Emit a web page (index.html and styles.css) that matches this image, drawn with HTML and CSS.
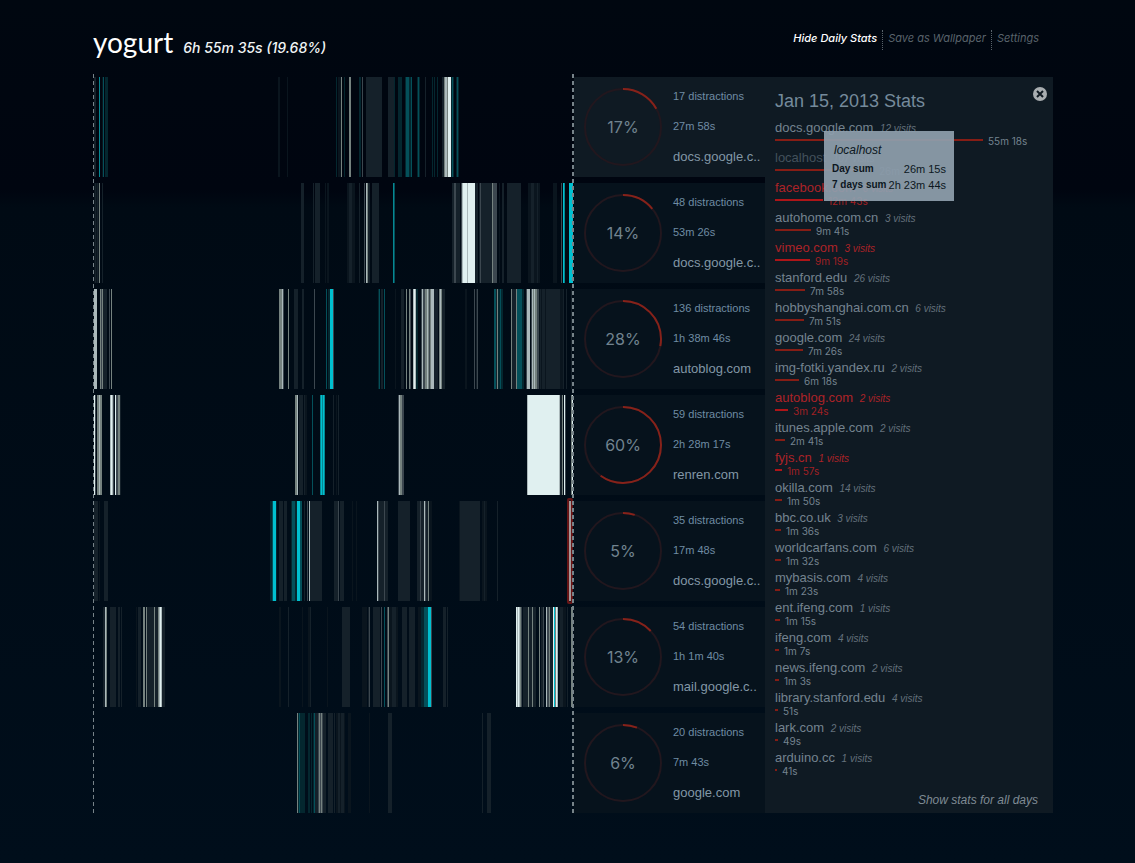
FILE: index.html
```html
<!DOCTYPE html>
<html lang="en">
<head>
<meta charset="utf-8">
<title>yogurt</title>
<link rel="stylesheet" href="styles.css">
</head>
<body>
<header class="top">
  <h1 class="logo">yogurt</h1>
  <p class="total">6h 55m 35s (19.68%)</p>
  <nav class="menu">
    <a class="menu-item current" href="#">Hide Daily Stats</a>
    <a class="menu-item" href="#">Save as Wallpaper</a>
    <a class="menu-item" href="#">Settings</a>
  </nav>
</header>
<main class="board">
  <div class="days">
    <section class="day selected">
      <svg class="strip" viewBox="0 0 480 100" preserveAspectRatio="none" aria-hidden="true">
        <path class="a" d="M9 50h1M185 50h2M194 50h1M245 50h3"/>
        <path class="b" d="M1 50h2M273 50h16M295 50h6M332 50h1M349 50h2"/>
        <path class="t1" d="M12 50h3M243 50h1M251 50h1M266 50h2M301 50h1M305 50h4M312 50h7M324 50h3M339 50h1M341 50h1M344 50h1M358 50h3M363 50h3"/>
        <path class="t2" d="M10 50h1M313 50h3M318 50h1M325 50h1M359 50h1M364 50h1"/>
        <path class="t3" d="M6 50h1"/>
        <path class="d" d="M248 50h1M256 50h2M351 50h1M354 50h1"/>
        <path class="c" d="M269 50h1"/>
        <path class="e" d="M352 50h2"/>
        <path class="f" d="M355 50h3"/>
      </svg>
      <div class="card">
        <svg class="ring" viewBox="0 0 80 80"><circle class="track" cx="40" cy="40" r="38"/><circle class="arc" pathLength="100" stroke-dasharray="17 100" cx="40" cy="40" r="38"/><text x="40" y="46">17%</text></svg>
        <div class="facts"><p>17 distractions</p><p>27m 58s</p><p class="site">docs.google.c..</p></div>
      </div>
    </section>
    <section class="day">
      <svg class="strip" viewBox="0 0 480 100" preserveAspectRatio="none" aria-hidden="true">
        <path class="a" d="M1 50h6M232 50h1M234 50h2M254 50h8M406 50h1M435 50h12M460 50h4"/>
        <path class="b" d="M2 50h1M4 50h1M9 50h1M208 50h3M220 50h1M222 50h5M256 50h3M266 50h1M275 50h2M279 50h7M359 50h2M363 50h4M382 50h3M386 50h13M409 50h2M414 50h14M438 50h3M444 50h1"/>
        <path class="c" d="M271 50h1M361 50h2M368 50h1M387 50h1M400 50h4M468 50h1"/>
        <path class="d" d="M6 50h1M274 50h1M399 50h1"/>
        <path class="e" d="M273 50h1M369 50h1"/>
        <path class="f" d="M370 50h12"/>
        <path class="e" d="M374 50h1"/>
        <path class="t2" d="M301 50h1"/>
        <path class="t3" d="M300 50h1M471 50h1"/>
        <path class="t4" d="M470 50h1M476 50h4"/>
      </svg>
      <div class="card">
        <svg class="ring" viewBox="0 0 80 80"><circle class="track" cx="40" cy="40" r="38"/><circle class="arc" pathLength="100" stroke-dasharray="14 100" cx="40" cy="40" r="38"/><text x="40" y="46">14%</text></svg>
        <div class="facts"><p>48 distractions</p><p>53m 26s</p><p class="site">docs.google.c..</p></div>
      </div>
    </section>
    <section class="day">
      <svg class="strip" viewBox="0 0 480 100" preserveAspectRatio="none" aria-hidden="true">
        <path class="a" d="M302 50h1M372 50h2M446 50h24M323 50h2"/>
        <path class="b" d="M10 50h4M201 50h4M209 50h2M288 50h2M308 50h3M341 50h4M349 50h3M383 50h1M403 50h1M419 50h4M447 50h1M449 50h3M453 50h14M470 50h1M473 50h1M478 50h1"/>
        <path class="c" d="M8 50h1M16 50h1M190 50h1M221 50h1M240 50h1M317 50h1M328 50h1M330 50h2M336 50h1M381 50h1M384 50h1M433 50h1M438 50h1M444 50h2"/>
        <path class="d" d="M7 50h1M9 50h1M18 50h1M186 50h3M195 50h1M313 50h1M316 50h1M332 50h2M335 50h1M337 50h1M346 50h3M404 50h1M418 50h1M423 50h1M440 50h4"/>
        <path class="e" d="M1 50h3M189 50h1M320 50h1M322 50h1M329 50h1M334 50h1M338 50h3M347 50h1M434 50h3M439 50h1M441 50h1"/>
        <path class="f" d="M321 50h1"/>
        <path class="t1" d="M235 50h2M285 50h1M323 50h2M405 50h5M429 50h2"/>
        <path class="t2" d="M233 50h1M286 50h1M291 50h1M401 50h2M407 50h1M424 50h5"/>
        <path class="t4" d="M237 50h3"/>
      </svg>
      <div class="card">
        <svg class="ring" viewBox="0 0 80 80"><circle class="track" cx="40" cy="40" r="38"/><circle class="arc" pathLength="100" stroke-dasharray="28 100" cx="40" cy="40" r="38"/><text x="40" y="46">28%</text></svg>
        <div class="facts"><p>136 distractions</p><p>1h 38m 46s</p><p class="site">autoblog.com</p></div>
      </div>
    </section>
    <section class="day">
      <svg class="strip" viewBox="0 0 480 100" preserveAspectRatio="none" aria-hidden="true">
        <path class="a" d="M243 50h1M211 50h3"/>
        <path class="b" d="M27 50h1M206 50h4M211 50h1M240 50h1M245 50h1M467 50h2"/>
        <path class="c" d="M2 50h1M20 50h1M23 50h2M305 50h1M309 50h2M472 50h1"/>
        <path class="d" d="M4 50h2M7 50h2M25 50h2M202 50h2M307 50h2M469 50h1M478 50h1"/>
        <path class="e" d="M6 50h1M17 50h1M19 50h1M204 50h1M306 50h1M434 50h1M466 50h1"/>
        <path class="f" d="M1 50h1M18 50h1M22 50h1M435 50h31M471 50h1M479 50h1"/>
        <path class="t2" d="M219 50h1"/>
        <path class="t3" d="M227 50h5"/>
        <path class="t4" d="M228 50h1M230 50h1"/>
      </svg>
      <div class="card">
        <svg class="ring" viewBox="0 0 80 80"><circle class="track" cx="40" cy="40" r="38"/><circle class="arc" pathLength="100" stroke-dasharray="60 100" cx="40" cy="40" r="38"/><text x="40" y="46">60%</text></svg>
        <div class="facts"><p>59 distractions</p><p>2h 28m 17s</p><p class="site">renren.com</p></div>
      </div>
    </section>
    <section class="day">
      <svg class="strip" viewBox="0 0 480 100" preserveAspectRatio="none" aria-hidden="true">
        <path class="a" d="M6 50h1M259 50h1M263 50h1M336 50h3M366 50h1M389 50h5"/>
        <path class="b" d="M1 50h4M11 50h4M186 50h4M191 50h3M211 50h1M217 50h12M241 50h4M247 50h4M286 50h9M305 50h12M324 50h3M328 50h7M367 50h20M391 50h1M404 50h1"/>
        <path class="c" d="M214 50h1M245 50h1M285 50h1M291 50h1M327 50h1M332 50h1"/>
        <path class="d" d="M335 50h1"/>
        <path class="e" d="M216 50h1M284 50h1M331 50h1"/>
        <path class="t1" d="M177 50h2M183 50h1M198 50h6"/>
        <path class="t2" d="M179 50h1M199 50h3M207 50h2"/>
        <path class="t4" d="M180 50h3M204 50h3"/>
        <path class="e" d="M476 50h2"/>
      </svg>
      <span class="marker"></span>
      <div class="card">
        <svg class="ring" viewBox="0 0 80 80"><circle class="track" cx="40" cy="40" r="38"/><circle class="arc" pathLength="100" stroke-dasharray="5 100" cx="40" cy="40" r="38"/><text x="40" y="46">5%</text></svg>
        <div class="facts"><p>35 distractions</p><p>17m 48s</p><p class="site">docs.google.c..</p></div>
      </div>
    </section>
    <section class="day">
      <svg class="strip" viewBox="0 0 480 100" preserveAspectRatio="none" aria-hidden="true">
        <path class="a" d="M43 50h1M186 50h2M209 50h1M215 50h3M234 50h1M269 50h5M296 50h9M325 50h3M466 50h7"/>
        <path class="b" d="M10 50h2M17 50h6M25 50h2M28 50h1M45 50h3M54 50h11M69 50h3M195 50h1M217 50h1M249 50h8M275 50h1M280 50h7M299 50h4M309 50h5M316 50h6M350 50h3M354 50h1M430 50h9M440 50h3M448 50h3M457 50h3M467 50h3M474 50h1"/>
        <path class="c" d="M276 50h1M288 50h1M294 50h1M338 50h1M428 50h1M450 50h1M454 50h2"/>
        <path class="d" d="M13 50h1M50 50h2M53 50h1M61 50h1M65 50h1M295 50h1M423 50h1M427 50h1M435 50h1M439 50h1M446 50h1M456 50h1M462 50h1M478 50h2"/>
        <path class="e" d="M12 50h1M66 50h3M424 50h3M453 50h1M464 50h1"/>
        <path class="f" d="M67 50h1M423 50h1M425 50h1M460 50h1M463 50h1"/>
        <path class="t1" d="M328 50h3"/>
        <path class="t2" d="M291 50h1M331 50h4"/>
        <path class="t4" d="M335 50h3M461 50h1"/>
      </svg>
      <div class="card">
        <svg class="ring" viewBox="0 0 80 80"><circle class="track" cx="40" cy="40" r="38"/><circle class="arc" pathLength="100" stroke-dasharray="13 100" cx="40" cy="40" r="38"/><text x="40" y="46">13%</text></svg>
        <div class="facts"><p>54 distractions</p><p>1h 1m 40s</p><p class="site">mail.google.c..</p></div>
      </div>
    </section>
    <section class="day">
      <svg class="strip" viewBox="0 0 480 100" preserveAspectRatio="none" aria-hidden="true">
        <path class="a" d="M243 50h9M255 50h3M276 50h1"/>
        <path class="b" d="M222 50h3M230 50h3M235 50h5M241 50h1M245 50h2M248 50h3M295 50h4M389 50h1M394 50h4"/>
        <path class="t1" d="M205 50h7M215 50h2M218 50h1M220 50h1"/>
        <path class="t2" d="M206 50h1M221 50h1"/>
        <path class="c" d="M225 50h5"/>
        <path class="d" d="M204 50h1M226 50h1M228 50h1"/>
      </svg>
      <div class="card">
        <svg class="ring" viewBox="0 0 80 80"><circle class="track" cx="40" cy="40" r="38"/><circle class="arc" pathLength="100" stroke-dasharray="6 100" cx="40" cy="40" r="38"/><text x="40" y="46">6%</text></svg>
        <div class="facts"><p>20 distractions</p><p>7m 43s</p><p class="site">google.com</p></div>
      </div>
    </section>
  </div>
  <aside class="panel">
    <button class="close" type="button" aria-label="Close">
      <svg viewBox="0 0 14 14"><circle cx="7" cy="7" r="7"/><path d="M4 4l6 6M10 4l-6 6"/></svg>
    </button>
    <h2 class="title">Jan 15, 2013 Stats</h2>
    <ul class="sites">
      <li><p class="name">docs.google.com <i>12 visits</i></p><p class="time"><span class="bar" style="width:208px"></span>55m 18s</p></li>
      <li class="hovered"><p class="name">localhost <i>107 visits</i></p><p class="time"><span class="bar" style="width:99px"></span>26m 15s</p>
        <div class="tip">
          <p class="tip-name">localhost</p>
          <dl><dt>Day sum</dt><dd>26m 15s</dd><dt>7 days sum</dt><dd>2h 23m 44s</dd></dl>
        </div>
      </li>
      <li class="bad"><p class="name">facebook.com <i>6 visits</i></p><p class="time"><span class="bar" style="width:48px"></span>12m 43s</p></li>
      <li><p class="name">autohome.com.cn <i>3 visits</i></p><p class="time"><span class="bar" style="width:36px"></span>9m 41s</p></li>
      <li class="bad"><p class="name">vimeo.com <i>3 visits</i></p><p class="time"><span class="bar" style="width:35px"></span>9m 19s</p></li>
      <li><p class="name">stanford.edu <i>26 visits</i></p><p class="time"><span class="bar" style="width:30px"></span>7m 58s</p></li>
      <li><p class="name">hobbyshanghai.com.cn <i>6 visits</i></p><p class="time"><span class="bar" style="width:29px"></span>7m 51s</p></li>
      <li><p class="name">google.com <i>24 visits</i></p><p class="time"><span class="bar" style="width:28px"></span>7m 26s</p></li>
      <li><p class="name">img-fotki.yandex.ru <i>2 visits</i></p><p class="time"><span class="bar" style="width:24px"></span>6m 18s</p></li>
      <li class="bad"><p class="name">autoblog.com <i>2 visits</i></p><p class="time"><span class="bar" style="width:13px"></span>3m 24s</p></li>
      <li><p class="name">itunes.apple.com <i>2 visits</i></p><p class="time"><span class="bar" style="width:10px"></span>2m 41s</p></li>
      <li class="bad"><p class="name">fyjs.cn <i>1 visits</i></p><p class="time"><span class="bar" style="width:7px"></span>1m 57s</p></li>
      <li><p class="name">okilla.com <i>14 visits</i></p><p class="time"><span class="bar" style="width:7px"></span>1m 50s</p></li>
      <li><p class="name">bbc.co.uk <i>3 visits</i></p><p class="time"><span class="bar" style="width:6px"></span>1m 36s</p></li>
      <li><p class="name">worldcarfans.com <i>6 visits</i></p><p class="time"><span class="bar" style="width:6px"></span>1m 32s</p></li>
      <li><p class="name">mybasis.com <i>4 visits</i></p><p class="time"><span class="bar" style="width:5px"></span>1m 23s</p></li>
      <li><p class="name">ent.ifeng.com <i>1 visits</i></p><p class="time"><span class="bar" style="width:5px"></span>1m 15s</p></li>
      <li><p class="name">ifeng.com <i>4 visits</i></p><p class="time"><span class="bar" style="width:4px"></span>1m 7s</p></li>
      <li><p class="name">news.ifeng.com <i>2 visits</i></p><p class="time"><span class="bar" style="width:4px"></span>1m 3s</p></li>
      <li><p class="name">library.stanford.edu <i>4 visits</i></p><p class="time"><span class="bar" style="width:3px"></span>51s</p></li>
      <li><p class="name">lark.com <i>2 visits</i></p><p class="time"><span class="bar" style="width:3px"></span>49s</p></li>
      <li><p class="name">arduino.cc <i>1 visits</i></p><p class="time"><span class="bar" style="width:2px"></span>41s</p></li>
    </ul>
    <a class="all" href="#">Show stats for all days</a>
  </aside>
</main>
</body>
</html>
```
FILE: styles.css
```css
* { box-sizing: border-box; }

html { min-height: 100%; background: linear-gradient(#000710, #000510 22%, #000a14 24%, #000e1b); }

body {
  margin: 0;
  padding: 0 82px 50px 93px;
  font: 11px/14px "Liberation Sans", Arial, sans-serif;
  color: #74899b;
}

p, h1, h2, ul, dl, dd { margin: 0; padding: 0; }

/* header */
.top { display: flex; align-items: baseline; height: 77px; padding-top: 25px; font-family: Lato, sans-serif; }
.logo { font-size: 28px; line-height: 34px; font-weight: 400; color: #fff; }
.total { margin-left: 10px; font-family: Inter, sans-serif; font-size: 14px; line-height: 20px; font-style: italic; font-weight: 500; color: #f0f4f5; }
.menu { display: flex; align-self: flex-start; margin: 5px 9px 0 auto; }
.menu-item {
  padding: 0 5px;
  font-family: Inter, sans-serif;
  font-size: 11px;
  line-height: 16px;
  height: 20px;
  font-style: italic;
  color: #59636b;
  text-decoration: none;
}
.menu-item + .menu-item { border-left: 1px dotted #59636b; }
.menu-item.current { color: #fff; font-weight: 500; }

/* board */
.board { display: grid; grid-template-columns: minmax(0, 1fr) 288px; }
.days { position: relative; display: grid; gap: 6px; }
.days::before, .days::after {
  content: "";
  position: absolute;
  top: -3px;
  bottom: 0;
  background: repeating-linear-gradient(#778389 0 4px, transparent 4px 7px);
}
.days::before { left: 0; width: 1px; }
.days::after { right: 191px; width: 2px; }
.day { position: relative; display: grid; grid-template-columns: minmax(0, 1fr) 191px; }
.strip { display: block; width: 100%; height: 100px; padding-right: 1px; shape-rendering: crispEdges; }
.strip path { fill: none; stroke-width: 100; }
.a { stroke: #0a151e; }
.b { stroke: #15212a; }
.c { stroke: #3c474f; }
.d { stroke: #75827f; }
.e { stroke: #abb9bb; }
.f { stroke: #e0f0f0; }
.t1 { stroke: #04272f; }
.t2 { stroke: #04505a; }
.t3 { stroke: #058893; }
.t4 { stroke: #00c0d0; }
.marker {
  position: absolute;
  top: -3px;
  bottom: -3px;
  right: 192px;
  width: 6px;
  border: 2px solid rgba(125, 22, 20, .75);
  border-radius: 2px;
  background: rgba(150, 60, 50, .25);
}

.card { display: flex; align-items: center; background: #06121c; }
.selected .card { background: #0f1a23; }
.ring { flex: none; width: 80px; height: 80px; margin: 0 10px 0 9px; }
.ring circle { fill: none; stroke-width: 2; }
.track { stroke: #22171e; }
.arc { stroke: #86221a; transform: rotate(-90deg); transform-origin: 40px 40px; }
.ring text { fill: #71838f; font: 16px Inter, sans-serif; text-anchor: middle; }
.facts { display: grid; gap: 16px; color: #6f8ca3; white-space: nowrap; }
.facts .site { font-size: 13px; line-height: 16px; color: #8297a6; }

/* stats panel */
.panel { position: relative; padding: 12px 10px 0; background: #0f1a23; }
.close { position: absolute; top: 10px; right: 6px; width: 14px; height: 14px; padding: 0; border: 0; background: none; }
.close svg { display: block; width: 14px; height: 14px; }
.close circle { fill: #a8adb0; }
.close path { fill: none; stroke: #101a22; stroke-width: 2; }
.title { font-size: 18px; line-height: 24px; font-weight: 400; color: #758a9b; }
.sites { margin-top: 7px; list-style: none; }
.sites li { position: relative; height: 30px; }
.name { font-size: 13px; line-height: 15px; color: #74838f; }
.name i { margin-left: 3px; font-size: 10px; line-height: 10px; color: #64717c; }
.time { display: flex; align-items: flex-start; gap: 5px; font-family: Inter, sans-serif; font-size: 10px; line-height: 12px; color: #74838f; }
.bar { height: 2px; margin-top: 4px; background: #861d15; }
.bad .name, .bad i { color: #ac2328; }
.bad .time { color: #a02024; }
.bad .bar { background: #ae1518; }
.hovered { z-index: 1; }
.hovered .name, .hovered .name i, .hovered .time { color: #43515c; }
.tip {
  position: absolute;
  top: -19px;
  left: 49px;
  width: 130px;
  height: 70px;
  padding: 12px 8px 0;
  background: rgba(143, 160, 174, .92);
  color: #0c1721;
}
.tip-name { padding-left: 2px; font-size: 12px; font-style: italic; }
.tip dl { display: grid; grid-template-columns: auto auto; justify-content: space-between; row-gap: 2px; margin-top: 5px; white-space: nowrap; }
.tip dt { font-size: 10px; font-weight: 700; }
.tip dd { text-align: right; }
.all { position: absolute; right: 15px; bottom: 6px; font-size: 12px; font-style: italic; color: #7f8b94; text-decoration: none; }
```
